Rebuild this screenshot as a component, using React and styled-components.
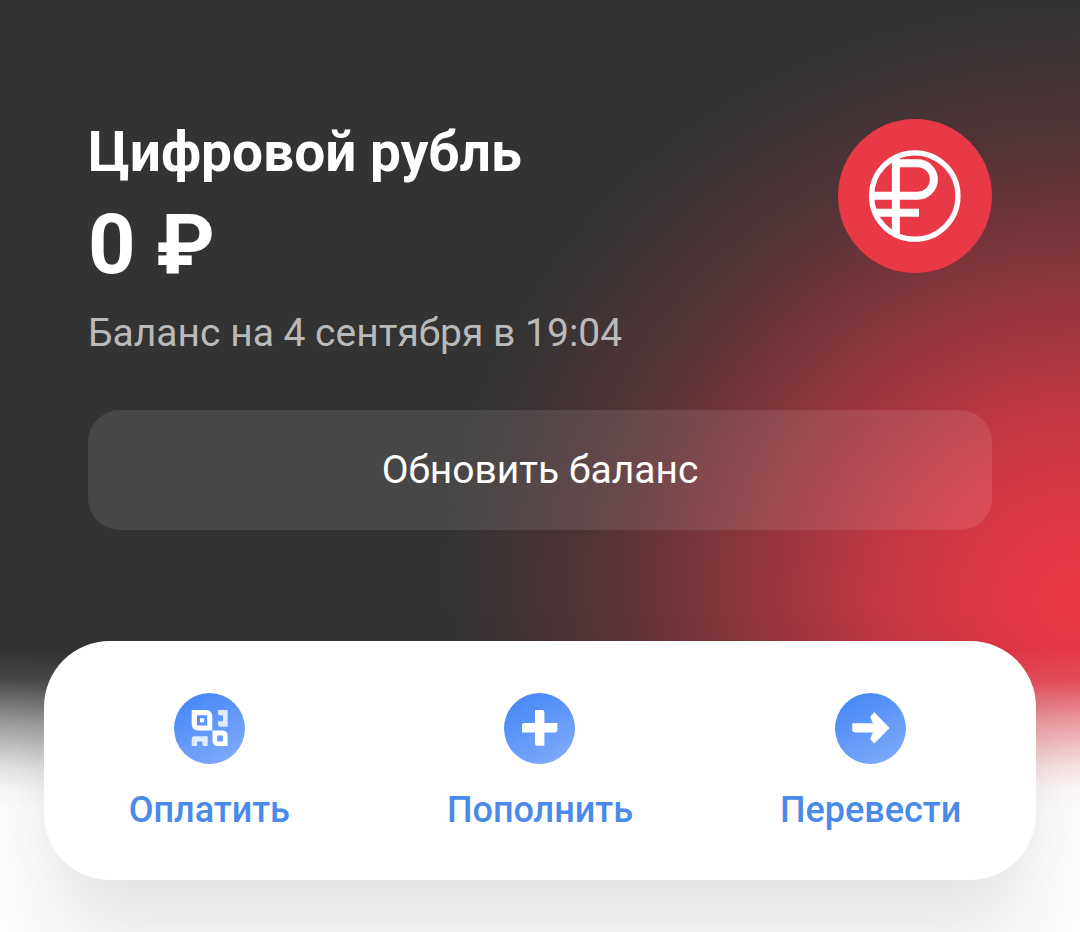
import React from 'react';
import styled, { createGlobalStyle } from 'styled-components';

const GlobalStyle = createGlobalStyle`
  * {
    box-sizing: border-box;
  }
  body {
    margin: 0;
    background: #fff;
    font-family: Roboto, "Liberation Sans", sans-serif;
  }
`

const Page = styled.div`
  min-height: 100vh;
  overflow: hidden;
  display: flex;
  flex-direction: column;
  background:
    linear-gradient(
      to bottom,
      rgba(255, 255, 255, 0) 650px,
      rgba(255, 255, 255, 0.1) 680px,
      rgba(255, 255, 255, 0.5) 722px,
      rgba(255, 255, 255, 0.85) 766px,
      rgba(255, 255, 255, 0.96) 788px,
      #fff 812px
    ),
    radial-gradient(
      640px 600px at 100% 600px,
      #e93846 0,
      rgba(233, 56, 70, 0.97) 10%,
      rgba(233, 56, 70, 0.89) 21%,
      rgba(233, 56, 70, 0.76) 33%,
      rgba(233, 56, 70, 0.59) 46%,
      rgba(233, 56, 70, 0.46) 55%,
      rgba(233, 56, 70, 0.28) 68%,
      rgba(233, 56, 70, 0.15) 79%,
      rgba(233, 56, 70, 0.05) 91%,
      rgba(233, 56, 70, 0) 100%
    ),
    #333;
`

const Hero = styled.main`
  display: flex;
  flex-direction: column;
  gap: 53px;
  padding: 119px 88px 111px;
`

const Summary = styled.div`
  display: flex;
  justify-content: space-between;
  align-items: flex-start;
`

const Title = styled.h1`
  margin: 0 0 12px;
  color: #fff;
  font-size: 55px;
  line-height: 66px;
  font-weight: 700;
`

const Amount = styled.p`
  margin: 0 0 16px;
  color: #fff;
  font-size: 83px;
  line-height: 96px;
  font-weight: 700;
`

const Updated = styled.p`
  margin: 0;
  color: #bababa;
  font-size: 39px;
  line-height: 48px;
`

const Logo = styled.svg`
  flex: none;
  width: 154px;
  height: 154px;
`

const RefreshButton = styled.button`
  height: 120px;
  border: 0;
  border-radius: 32px;
  background: rgba(255, 255, 255, 0.1);
  color: #fff;
  font: inherit;
  font-size: 39px;
  line-height: 48px;
  cursor: pointer;
`

const Actions = styled.nav`
  display: grid;
  grid-template-columns: repeat(3, 1fr);
  margin: 0 44px;
  padding: 52px 0 48px;
  border-radius: 66px;
  background: #fff;
  box-shadow:
    0 8px 56px rgba(0, 0, 0, 0.04),
    0 88px 88px rgba(0, 0, 0, 0.08);
`

const ActionButton = styled.button`
  display: flex;
  flex-direction: column;
  align-items: center;
  gap: 24px;
  padding: 0;
  border: 0;
  background: none;
  color: #4a8ae8;
  font: inherit;
  font-size: 36px;
  line-height: 44px;
  font-weight: 500;
  cursor: pointer;
`

const IconCircle = styled.span`
  width: 71px;
  height: 71px;
  border-radius: 50%;
  background: linear-gradient(150deg, #4a8af6 15%, #84aefc 100%);

  svg {
    display: block;
    width: 100%;
    height: 100%;
    fill: #fff;
  }
`

const RubleLogo = () => (
  <Logo viewBox="0 0 154 154" aria-hidden="true">
    <circle cx="77" cy="77" r="77" fill="#e93846" />
    <g fill="none" stroke="#fff">
      <circle cx="76.8" cy="77" r="43.2" strokeWidth="5.2" />
      <path
        d="M57.9 37V116M58 44.2H79.6A16.2 16.2 0 0 1 79.6 76.7H34M37 93.8H81"
        strokeWidth="8"
      />
    </g>
  </Logo>
)

const PayIcon = () => (
  <svg viewBox="0 0 71 71" aria-hidden="true">
    <path
      fillRule="evenodd"
      d="M17.7 17H32.3A6 6 0 0 1 38.3 23V37.4H23.7A6 6 0 0 1 17.7 31.4ZM23 22.2V32.4H33.2V22.2Z"
    />
    <path d="M26 25.2H30.2V29.4H26Z" />
    <path
      fillRule="evenodd"
      d="M38.5 37.6H48.6A5 5 0 0 1 53.6 42.6V53H43.5A5 5 0 0 1 38.5 48ZM43.2 42.6V48.4H49V42.6Z"
    />
    <g opacity="0.8">
      <path d="M44 17H53.7V33.7H47A3 3 0 0 1 44 30.7V28.2H49V22.4H46A2 2 0 0 1 44 20.4Z" />
      <path d="M17.7 46.3A3 3 0 0 1 20.7 43.3H33.7V53H30.3A2 2 0 0 1 28.3 51V48.4H23V53H17.7Z" />
    </g>
  </svg>
)

const PlusIcon = () => (
  <svg viewBox="0 0 71 71" aria-hidden="true">
    <path d="M31 17H38A2.4 2.4 0 0 1 40.4 19.4V30H53.4V36.8A2.6 2.6 0 0 1 50.8 39.4H40.4V52.8H33.4A2.4 2.4 0 0 1 31 50.4V39.4H18V32.6A2.6 2.6 0 0 1 20.6 30H31Z" />
  </svg>
)

const ArrowIcon = () => (
  <svg viewBox="0 0 71 71" aria-hidden="true">
    <path d="M17.2 30.2H38L36 26.2Q34.8 23.8 36.4 22.2L39.3 19.2L54.6 34.9L39.3 50.6L36.4 47.6Q34.8 46 36 43.6L38 39.6H20.2A3 3 0 0 1 17.2 36.6Z" />
  </svg>
)

const actions = [
  { label: 'Оплатить', Icon: PayIcon },
  { label: 'Пополнить', Icon: PlusIcon },
  { label: 'Перевести', Icon: ArrowIcon },
]

function App() {
  return (
    <>
      <GlobalStyle />
      <Page>
        <Hero>
          <Summary>
            <div>
              <Title>Цифровой рубль</Title>
              <Amount>0 ₽</Amount>
              <Updated>Баланс на 4 сентября в 19:04</Updated>
            </div>
            <RubleLogo />
          </Summary>
          <RefreshButton type="button">Обновить баланс</RefreshButton>
        </Hero>
        <Actions>
          {actions.map(({ label, Icon }) => (
            <ActionButton type="button" key={label}>
              <IconCircle><Icon /></IconCircle>
              {label}
            </ActionButton>
          ))}
        </Actions>
      </Page>
    </>
  )
}

export default App
